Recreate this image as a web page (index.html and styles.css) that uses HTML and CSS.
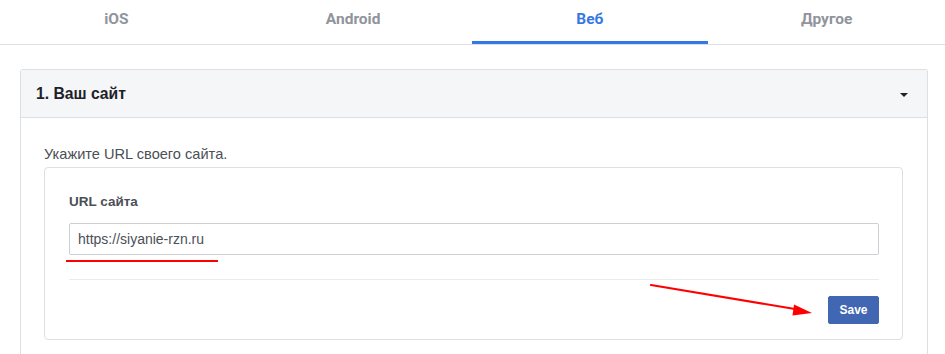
FILE: index.html
```html
<!DOCTYPE html>
<html lang="ru">
<head>
<meta charset="utf-8">
<title>Веб</title>
<link rel="stylesheet" href="styles.css">
</head>
<body>
<nav class="tabs">
  <div class="tab">iOS</div>
  <div class="tab">Android</div>
  <div class="tab active">Веб</div>
  <div class="tab">Другое</div>
</nav>
<main class="page">
  <section class="card">
    <header class="card-head">
      <span class="card-title">1. Ваш сайт</span>
      <span class="caret"></span>
    </header>
    <div class="card-body">
      <p class="hint">Укажите URL своего сайта.</p>
      <div class="panel">
        <label class="field-label">URL сайта</label>
        <div class="input">https://siyanie-rzn.ru</div>
        <div class="mark"></div>
        <div class="sep"></div>
        <div class="actions">
          <button class="btn">Save</button>
        </div>
      </div>
    </div>
  </section>
</main>
<svg class="arrow" width="945" height="354" viewBox="0 0 945 354">
  <line x1="651" y1="285" x2="798" y2="309.5" stroke="#ff0000" stroke-width="2.2" stroke-linecap="round"/>
  <polygon points="812,313 794,304.5 792.5,315.5" fill="#ff0000"/>
</svg>
</body>
</html>
```

FILE: styles.css
```css
html, body {
  margin: 0;
  padding: 0;
  background: #ffffff;
}
body {
  width: 945px;
  height: 354px;
  overflow: hidden;
  position: relative;
  font-family: "Liberation Sans", Arial, sans-serif;
}
.tabs {
  display: flex;
  margin-left: -2px;
  border-bottom: 1px solid #dddfe2;
}
.tab {
  width: 239px;
  height: 44px;
  box-sizing: border-box;
  padding-top: 9px;
  line-height: 20px;
  text-align: center;
  font-family: Roboto, "Liberation Sans", sans-serif;
  font-weight: 700;
  font-size: 15.5px;
  color: #90949c;
  border-bottom: 3px solid transparent;
}
.tab.active {
  color: #3578e5;
  border-bottom-color: #3578e5;
}
.page {
  padding: 24px 17px 0 20px;
}
.card {
  width: 908px;
  box-sizing: border-box;
  border: 1px solid #dddfe2;
  border-bottom: 0;
  border-radius: 3px 3px 0 0;
  background: #fff;
  height: 285px;
}
.card-head {
  height: 47px;
  background: #f5f6f7;
  border-bottom: 1px solid #dddfe2;
  display: flex;
  align-items: center;
  justify-content: space-between;
  padding: 0 19px 0 15px;
}
.card-title {
  font-size: 15.7px;
  font-weight: 700;
  color: #1d2129;
  padding-top: 1px;
}
.caret {
  width: 0;
  height: 0;
  border-left: 4px solid transparent;
  border-right: 4px solid transparent;
  border-top: 4.5px solid #1d2129;
  margin-top: 3px;
}
.card-body {
  padding: 27px 24px 0 23px;
}
.hint {
  margin: 0 0 4px;
  font-size: 14.6px;
  line-height: 18px;
  color: #4b4f56;
}
.panel {
  border: 1px solid #dddfe2;
  border-radius: 4px;
  padding: 26px 23px 15px 24px;
}
.field-label {
  display: block;
  font-size: 13.5px;
  font-weight: 700;
  line-height: 16px;
  color: #4b4f56;
  margin-bottom: 13px;
}
.input {
  height: 32px;
  box-sizing: border-box;
  border: 1px solid #ccd0d5;
  border-radius: 2px;
  padding: 0 8px;
  font-size: 14px;
  line-height: 30px;
  color: #4b4f56;
}
.mark {
  width: 152px;
  height: 2px;
  background: #ff0000;
  margin: 5px 0 17px -3px;
}
.sep {
  height: 1px;
  background: #e9ebee;
}
.actions {
  display: flex;
  justify-content: flex-end;
  padding-top: 16px;
}
.btn {
  width: 51px;
  height: 28px;
  box-sizing: border-box;
  background: #4267b2;
  border: 1px solid #4267b2;
  border-radius: 2px;
  color: #ffffff;
  font-family: "Liberation Sans", Arial, sans-serif;
  font-weight: 700;
  font-size: 12px;
  padding: 0;
}
.arrow {
  position: absolute;
  left: 0;
  top: 0;
  pointer-events: none;
}
```
